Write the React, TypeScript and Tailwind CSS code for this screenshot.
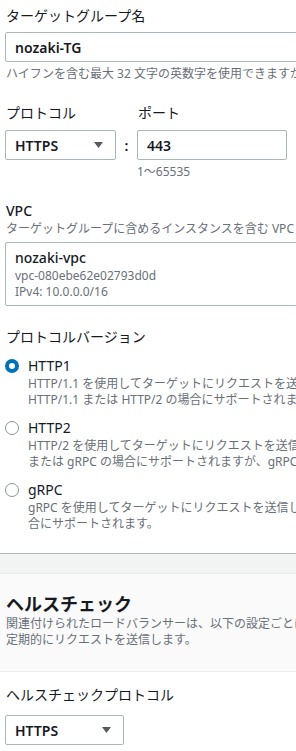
import React from "react";

const font = { fontFamily: '"Noto Sans", "Noto Sans CJK JP", sans-serif' };

function Caret() {
  return (
    <svg width="9" height="6" viewBox="0 0 9 6" className="shrink-0">
      <path d="M0 0h9L4.5 6z" fill="#545b64" />
    </svg>
  );
}

function Select({ value, width }: { value: string; width: string }) {
  return (
    <div
      className={`flex h-[30px] items-center justify-between rounded-[2px] border border-[#aab7b8] bg-white pl-[9px] pr-[12px] ${width}`}
    >
      <span className="text-[14px] font-semibold text-[#16191f]">{value}</span>
      <Caret />
    </div>
  );
}

function Radio({
  checked,
  title,
  lines,
}: {
  checked?: boolean;
  title: string;
  lines: string[];
}) {
  return (
    <div className="flex gap-[9px] pl-[5px]">
      <div className="flex h-[20px] items-center">
        {checked ? (
          <span className="block size-[14px] rounded-full border-[4px] border-[#0073bb] bg-white" />
        ) : (
          <span className="block size-[14px] rounded-full border border-[#879596] bg-white" />
        )}
      </div>
      <div>
        <div className="text-[14px] leading-[20px] text-[#16191f]">{title}</div>
        {lines.map((l) => (
          <div key={l} className="whitespace-nowrap text-[12px] leading-[16px] text-[#687078]">
            {l}
          </div>
        ))}
      </div>
    </div>
  );
}

export default function App() {
  return (
    <div className="h-[751px] w-[296px] overflow-hidden bg-[#f2f3f3]" style={font}>
      <div className="w-[420px]">
        {/* ターゲットグループの基本設定 */}
        <div className="border-b border-[#aab7b8] bg-white pb-[21px] pt-[5px] text-[#16191f]">
          <div className="pl-[6px] text-[14px] leading-[22px]">ターゲットグループ名</div>
          <div className="ml-[5px] mt-[5px] flex h-[30px] items-center rounded-[2px] border border-[#aab7b8] pl-[9px]">
            <span className="text-[14px] font-semibold">nozaki-TG</span>
          </div>
          <div className="mt-[4px] whitespace-nowrap pl-[6px] text-[12px] leading-[16px] text-[#687078]">
            ハイフンを含む最大 32 文字の英数字を使用できますが、先頭または末尾にハイフンを使用することはできません。
          </div>

          <div className="mt-[20px] flex items-start pl-[5px]">
            <div>
              <div className="pl-[1px] text-[14px] leading-[22px]">プロトコル</div>
              <div className="mt-[6px]">
                <Select value="HTTPS" width="w-[111px]" />
              </div>
            </div>
            <div className="mt-[28px] flex h-[30px] w-[21px] items-center justify-center text-[14px] font-semibold">
              :
            </div>
            <div>
              <div className="pl-[1px] text-[14px] leading-[22px]">ポート</div>
              <div className="mt-[6px] flex h-[30px] w-[150px] items-center rounded-[2px] border border-[#aab7b8] pl-[9px]">
                <span className="text-[14px] font-semibold">443</span>
              </div>
              <div className="mt-[4px] text-[12px] leading-[16px] text-[#687078]">1〜65535</div>
            </div>
          </div>

          <div className="mt-[21px] pl-[6px] text-[14px] font-medium leading-[20px]">VPC</div>
          <div className="whitespace-nowrap pl-[6px] text-[12px] leading-[16px] text-[#687078]">
            ターゲットグループに含めるインスタンスを含む VPC を選択します。
          </div>
          <div className="ml-[5px] mt-[5px] rounded-[2px] border border-[#aab7b8] pb-[5px] pl-[9px] pt-[5px]">
            <div className="text-[14px] font-medium leading-[20px]">nozaki-vpc</div>
            <div className="text-[12px] leading-[16px] text-[#687078]">vpc-080ebe62e02793d0d</div>
            <div className="text-[12px] leading-[16px] text-[#687078]">IPv4: 10.0.0.0/16</div>
          </div>

          <div className="mt-[20px] pl-[6px] text-[14px] leading-[22px]">プロトコルバージョン</div>
          <div className="mt-[8px] flex flex-col gap-[10px]">
            <Radio
              checked
              title="HTTP1"
              lines={[
                "HTTP/1.1 を使用してターゲットにリクエストを送信します。リクエストプロトコルが",
                "HTTP/1.1 または HTTP/2 の場合にサポートされます。",
              ]}
            />
            <Radio
              title="HTTP2"
              lines={[
                "HTTP/2 を使用してターゲットにリクエストを送信します。リクエストプロトコルが HTTP/2",
                "または gRPC の場合にサポートされますが、gRPC 固有の機能は使用できません。",
              ]}
            />
            <Radio
              title="gRPC"
              lines={[
                "gRPC を使用してターゲットにリクエストを送信します。リクエストプロトコルが gRPC の場",
                "合にサポートされます。",
              ]}
            />
          </div>
        </div>

        <div className="h-[19px]" />

        {/* ヘルスチェック */}
        <div className="border-t border-[#eaeded] bg-white">
          <div className="border-b border-[#eaeded] bg-[#fafafa] pb-[23px] pl-[6px] pt-[18px] text-[#16191f]">
            <div className="text-[18px] font-bold leading-[24px]">ヘルスチェック</div>
            <div className="whitespace-nowrap text-[12px] leading-[16px] text-[#687078]">
              関連付けられたロードバランサーは、以下の設定ごとに、登録されたターゲットに
            </div>
            <div className="text-[12px] leading-[16px] text-[#687078]">定期的にリクエストを送信します。</div>
          </div>
          <div className="pb-[20px] pl-[5px] pt-[12px] text-[#16191f]">
            <div className="pl-[1px] text-[14px] leading-[22px]">ヘルスチェックプロトコル</div>
            <div className="mt-[9px]">
              <Select value="HTTPS" width="w-[119px]" />
            </div>
          </div>
        </div>
      </div>
    </div>
  );
}
